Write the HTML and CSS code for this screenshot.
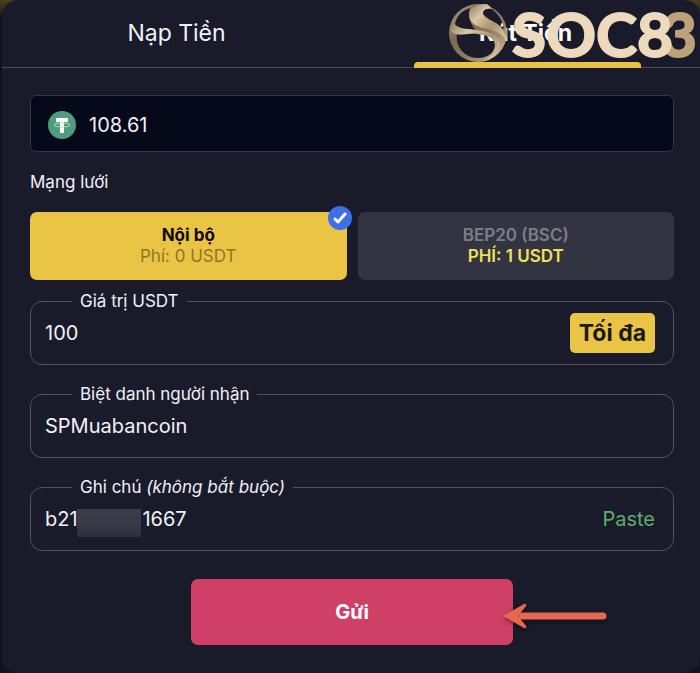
FILE: index.html
```
<!DOCTYPE html>
<html lang="vi">
<head>
    <meta charset="UTF-8">
    <meta name="viewport" content="width=device-width, initial-scale=1.0">
    <title>Rút Tiền</title>
    <link rel="stylesheet" href="styles.css">
</head>
<body>
<div class="panel">
    <nav class="tabs">
        <button type="button" class="tab">Nạp Tiền</button>
        <button type="button" class="tab tab-active">Rút Tiền</button>
        <div class="brand">
            <svg class="brand-mark" viewBox="0 0 60 60" aria-hidden="true">
                <defs>
                    <linearGradient id="rim" x1="0" y1="0" x2="1" y2="1">
                        <stop offset="0" stop-color="#b8a284"/>
                        <stop offset="0.35" stop-color="#7b6a54"/>
                        <stop offset="0.6" stop-color="#8f7b60"/>
                        <stop offset="1" stop-color="#d9c3a3"/>
                    </linearGradient>
                    <linearGradient id="ribbon" x1="0" y1="0" x2="1" y2="1">
                        <stop offset="0" stop-color="#8d7759"/>
                        <stop offset="0.3" stop-color="#dcc6a7"/>
                        <stop offset="0.6" stop-color="#a8926f"/>
                        <stop offset="1" stop-color="#e6d0b1"/>
                    </linearGradient>
                </defs>
                <path fill="url(#rim)" fill-rule="evenodd" d="M29 1a29 29 0 1 1 0 58 29 29 0 1 1 0-58ZM21 5C9 9 5 18 6 26c7 4 18 2 26 6C22 25 18 13 21 5ZM8 31C6 43 15 55 29 55c10 0 17-6 17-13 0-8-8-10-18-11C20 30 13 33 8 31ZM41 5c-6-1-9 3-6 7 6 6 16 8 20 18 0-12-6-20-14-25Z"/>
                <path fill="url(#ribbon)" d="M36 1C26 1 20 6 20 12c0 9 9 12 18 14 10 2 17 6 19 12 0-9-4-15-12-19-7-3-12-6-11-10 1-3 5-4 9-3-2-3-4-5-7-5Z"/>
                <path fill="url(#ribbon)" d="M4 18C8 27 17 25 28 27c13 2 23 5 23 15 0 8-8 15-16 16 8-5 11-10 11-16 0-7-7-10-17-11C19 29 8 35 2 28c0-4 1-7 2-10Z"/>
            </svg>
            <span class="brand-name">SOC8<span class="brand-tail">3</span></span>
        </div>
    </nav>

    <form class="form-container">
        <div class="balance">
            <svg class="coin" viewBox="0 0 28 28" aria-hidden="true">
                <circle cx="14" cy="14" r="14" fill="#4f9d7c"/>
                <path fill="#fff" d="M8 7h12v4h-4v11h-4V11H8z"/>
                <ellipse cx="14" cy="14" rx="8" ry="2" fill="none" stroke="#b9dccd" stroke-width="1"/>
            </svg>
            <span>108.61</span>
        </div>

        <h2 class="label">Mạng lưới</h2>
        <div class="networks">
            <button type="button" class="network network-selected">
                <span class="network-name">Nội bộ</span>
                <span class="network-fee">Phí: 0 USDT</span>
                <svg class="check" viewBox="0 0 24 24" aria-hidden="true">
                    <circle cx="12" cy="12" r="12" fill="#3f6fe8"/>
                    <path d="M7 13l3 3 7-8" fill="none" stroke="#fff" stroke-width="3" stroke-linecap="round" stroke-linejoin="round"/>
                </svg>
            </button>
            <button type="button" class="network">
                <span class="network-name">BEP20 (BSC)</span>
                <span class="network-fee">PHÍ: 1 USDT</span>
            </button>
        </div>

        <fieldset class="field">
            <legend><label for="amount">Giá trị USDT</label></legend>
            <div class="field-row">
                <input type="text" id="amount" name="amount" value="100">
                <button type="button" class="max-button">Tối đa</button>
            </div>
        </fieldset>

        <fieldset class="field">
            <legend><label for="nickname">Biệt danh người nhận</label></legend>
            <div class="field-row">
                <input type="text" id="nickname" name="nickname" value="SPMuabancoin">
            </div>
        </fieldset>

        <fieldset class="field">
            <legend><label for="note">Ghi chú <em>(không bắt buộc)</em></label></legend>
            <div class="field-row">
                <input type="text" id="note" name="note" value="b21&#8199;&#8199;&#8199;&#8199;&#8199;1667">
                <span class="mask"></span>
                <button type="button" class="paste-button">Paste</button>
            </div>
        </fieldset>

        <div class="button-container">
            <button type="submit" class="send-button">Gửi</button>
            <svg class="arrow" viewBox="0 0 108 32" aria-hidden="true">
                <path d="M20 16h81" fill="none" stroke="#e86850" stroke-width="7" stroke-linecap="round"/>
                <path d="M1 16 22 4q3-1 2 2l-8 10 8 10q1 3-2 2Z" fill="#e86850"/>
            </svg>
        </div>
    </form>
</div>
</body>
</html>
```
FILE: styles.css
```
* {
    margin: 0;
    padding: 0;
    box-sizing: border-box;
}

body {
    background: linear-gradient(#4a3f1c, #10121f 20px);
    font-family: Inter, "Noto Sans", sans-serif;
    color: #f1f2f6;
}

button, input {
    font-family: inherit;
    color: inherit;
    border: none;
    background: none;
}

button {
    cursor: pointer;
}

.panel {
    min-height: 100vh;
    margin-left: 2px;
    background-color: #191b2b;
    border-radius: 16px;
    overflow: hidden;
}

.tabs {
    display: flex;
    position: relative;
    height: 68px;
    border-bottom: 1px solid #4b4c5a;
}

.tab {
    flex: 1;
    position: relative;
    padding-bottom: 2px;
    font-size: 23px;
}

.tab-active {
    font-weight: bold;
    color: #fff;
}

.tab-active::after {
    content: "";
    position: absolute;
    left: 18%;
    right: 17%;
    bottom: -1px;
    height: 6px;
    border-radius: 4px 4px 0 0;
    background-color: #e9c445;
}

/* watermark over the tabs */
.brand {
    display: flex;
    align-items: center;
    gap: 3px;
    position: absolute;
    top: 3px;
    right: 3px;
    height: 60px;
    isolation: isolate;
    pointer-events: none;
}

.brand-mark {
    width: 60px;
    height: 60px;
}

.brand-name {
    font-family: Lato, sans-serif;
    font-size: 62px;
    font-weight: bold;
    line-height: 60px;
    color: #eed9bd;
    -webkit-text-stroke: 2px #eed9bd;
}

.brand-tail {
    display: inline-block;
    position: relative;
    z-index: -1;
    margin-left: -12px;
    color: #bda17a;
    -webkit-text-stroke: 2px #bda17a;
}

.form-container {
    display: flex;
    flex-direction: column;
    padding: 27px 26px 28px 28px;
}

.balance {
    display: flex;
    align-items: center;
    gap: 13px;
    height: 57px;
    padding: 2px 17px 0;
    border: 1px solid #34364a;
    border-radius: 6px;
    background-color: #060919;
    font-size: 20px;
}

.coin {
    width: 28px;
    height: 28px;
}

.label {
    margin: 19px 0;
    font-size: 17px;
    font-weight: normal;
    line-height: 22px;
}

.networks {
    display: flex;
    gap: 11px;
    margin-bottom: 10px;
}

.network {
    flex: 1;
    display: flex;
    flex-direction: column;
    align-items: center;
    justify-content: center;
    position: relative;
    height: 68px;
    border-radius: 7px;
    background-color: #323441;
    font-size: 17px;
    line-height: 21px;
}

.network-name {
    font-weight: 600;
    color: #7d7e88;
}

.network-fee {
    font-weight: 600;
    color: #f0e05a;
}

.network-selected {
    background-color: #e9c445;
}

.network-selected .network-name {
    font-weight: bold;
    color: #0c0b08;
}

.network-selected .network-fee {
    font-weight: normal;
    color: #8f7627;
}

.check {
    position: absolute;
    top: -6px;
    right: -5px;
    width: 24px;
    height: 24px;
}

.field {
    min-width: 0;
    margin-bottom: 18px;
    padding-bottom: 11px;
    border: 1px solid #4f515f;
    border-radius: 12px;
}

.field legend {
    margin-left: 41px;
    padding: 0 8px;
    font-size: 17px;
    line-height: 22px;
}

.field-row {
    display: flex;
    align-items: center;
    position: relative;
    height: 41px;
    padding: 0 18px 0 14px;
}

.field-row input {
    flex: 1;
    min-width: 0;
    font-size: 20px;
    outline: none;
}

.max-button {
    height: 40px;
    padding: 0 9px;
    border-radius: 5px;
    background-color: #e9c445;
    color: #1c1a16;
    font-size: 23px;
    font-weight: bold;
}

.paste-button {
    color: #5cae69;
    font-size: 20px;
}

.mask {
    position: absolute;
    left: 46px;
    top: 11px;
    width: 64px;
    height: 28px;
    background: linear-gradient(#3b3d4a, #373946 60%, #2c2e3c);
}

.button-container {
    position: relative;
    width: 50%;
    margin: 10px auto 0;
}

.send-button {
    width: 100%;
    height: 66px;
    border-radius: 7px;
    background-color: #d03f66;
    color: #fff;
    font-size: 20px;
    font-weight: bold;
}

/* pointer to the send button */
.arrow {
    position: absolute;
    left: calc(100% - 11px);
    top: 21px;
    width: 108px;
    height: 32px;
    filter: drop-shadow(0 2px 2px rgba(0, 0, 0, 0.4));
}
```
